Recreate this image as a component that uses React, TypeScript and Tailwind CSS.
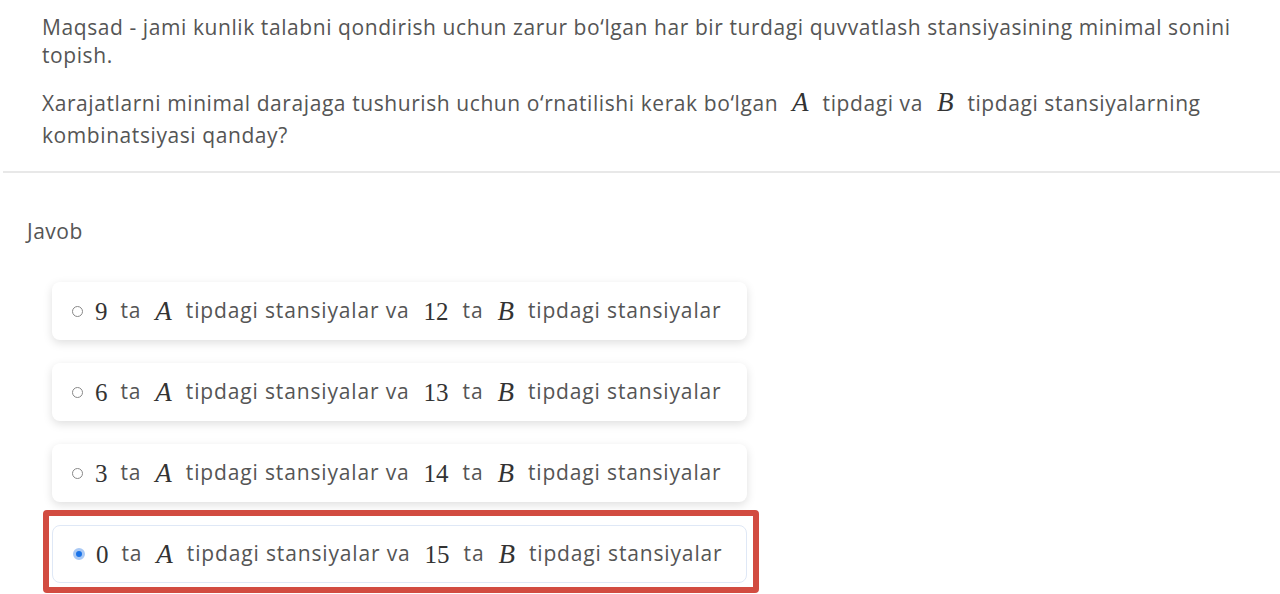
import React from "react";

const sans = { fontFamily: "'Open Sans', 'Noto Sans', sans-serif" };

function M({ children, italic, first }: { children: React.ReactNode; italic?: boolean; first?: boolean }) {
  return (
    <span
      className={`inline-block leading-none align-baseline ${first ? "mr-[13px]" : "mx-[14px]"} ${italic ? "italic text-[27px]" : "text-[25px]"} tracking-normal text-[#333]`}
      style={{ fontFamily: "'Liberation Serif', serif" }}
    >
      {children}
    </span>
  );
}

const options = [
  { a: "9", b: "12" },
  { a: "6", b: "13" },
  { a: "3", b: "14" },
  { a: "0", b: "15", selected: true },
];

export default function App() {
  return (
    <div className="w-[1280px] h-[594px] bg-white overflow-hidden text-[#555]" style={sans}>
      <div className="pl-[42px] pr-[20px] pt-[13px] pb-[20px] text-[21px] leading-[28px] tracking-[0.58px]">
        <p>
          Maqsad - jami kunlik talabni qondirish uchun zarur bo‘lgan har bir turdagi quvvatlash stansiyasining minimal sonini topish.
        </p>
        <p className="mt-[18px] leading-[32px]">
          Xarajatlarni minimal darajaga tushurish uchun o‘rnatilishi kerak bo‘lgan<M italic>A</M>tipdagi va<M italic>B</M>tipdagi stansiyalarning kombinatsiyasi qanday?
        </p>
      </div>
      <div className="ml-[3px] h-[2px] bg-[#e8e8e8]" />
      <div className="pl-[27px] pt-[44px] text-[21px] leading-[28px] tracking-[0.5px]">Javob</div>
      <div className="ml-[52px] mt-[37px] w-[695px] flex flex-col gap-[23px]">
        {options.map((o, i) => (
          <div
            key={i}
            className={`relative h-[58px] rounded-[8px] bg-white flex items-center pl-[20px] text-[21px] tracking-[0.85px] shadow-[0_3px_10px_rgba(0,0,0,0.13)] ${o.selected ? "border border-[#dfe8f6] shadow-none" : ""}`}
          >
            {o.selected ? (
              <span className="w-[12px] h-[12px] rounded-full border-[3px] border-[#aac9f4] bg-[#1a73e8] mr-[11px]" />
            ) : (
              <span className="w-[11px] h-[11px] rounded-full border border-[#888] mr-[12px]" />
            )}
            <M first>{o.a}</M>
            <span>ta</span>
            <M italic>A</M>
            <span>tipdagi stansiyalar va</span>
            <M>{o.b}</M>
            <span>ta</span>
            <M italic>B</M>
            <span>tipdagi stansiyalar</span>
            {o.selected && (
              <div className="absolute -left-[10px] -right-[13px] -top-[16px] -bottom-[11px] border-[6px] border-[#d24c41] rounded-[4px] pointer-events-none" />
            )}
          </div>
        ))}
      </div>
    </div>
  );
}
